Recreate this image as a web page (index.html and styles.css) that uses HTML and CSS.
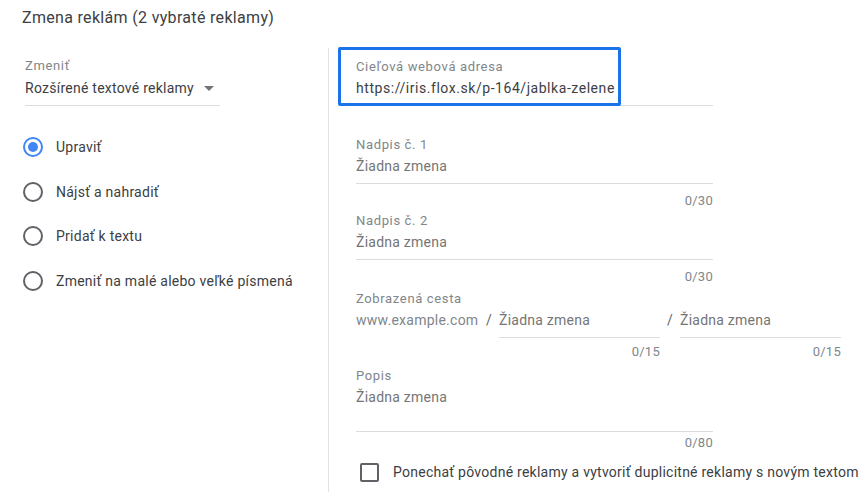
FILE: index.html
```html
<!DOCTYPE html>
<html lang="sk">
<head>
<meta charset="utf-8">
<title>Zmena reklám</title>
<link rel="stylesheet" href="styles.css">
</head>
<body>
<div class="page">
  <h1 class="title">Zmena reklám (2 vybraté reklamy)</h1>
  <div class="columns">
    <div class="left">
      <div class="select">
        <div class="label">Zmeniť</div>
        <div class="select-value">
          <span>Rozšírené textové reklamy</span>
          <span class="caret"></span>
        </div>
      </div>
      <div class="radios">
        <div class="radio-row">
          <span class="radio checked"></span>
          <span class="radio-label">Upraviť</span>
        </div>
        <div class="radio-row">
          <span class="radio"></span>
          <span class="radio-label">Nájsť a nahradiť</span>
        </div>
        <div class="radio-row">
          <span class="radio"></span>
          <span class="radio-label">Pridať k textu</span>
        </div>
        <div class="radio-row">
          <span class="radio"></span>
          <span class="radio-label">Zmeniť na malé alebo veľké písmená</span>
        </div>
      </div>
    </div>
    <div class="right">
      <div class="field field-url">
        <div class="focus-ring"></div>
        <div class="label">Cieľová webová adresa</div>
        <div class="value dark url">https://iris.flox.sk/p-164/jablka-zelene</div>
      </div>
      <div class="field">
        <div class="label">Nadpis č. 1</div>
        <div class="value">Žiadna zmena</div>
      </div>
      <div class="counter">0/30</div>
      <div class="field">
        <div class="label">Nadpis č. 2</div>
        <div class="value">Žiadna zmena</div>
      </div>
      <div class="counter">0/30</div>
      <div class="path">
        <div class="label">Zobrazená cesta</div>
        <div class="path-row">
          <div class="path-domain">www.example.com</div>
          <div class="sep">/</div>
          <div class="path-part">
            <div class="value path-value">Žiadna zmena</div>
            <div class="counter">0/15</div>
          </div>
          <div class="sep">/</div>
          <div class="path-part">
            <div class="value path-value">Žiadna zmena</div>
            <div class="counter">0/15</div>
          </div>
        </div>
      </div>
      <div class="field field-desc">
        <div class="label">Popis</div>
        <div class="value">Žiadna zmena</div>
      </div>
      <div class="counter">0/80</div>
      <label class="check-row">
        <span class="checkbox"></span>
        <span class="check-label">Ponechať pôvodné reklamy a vytvoriť duplicitné reklamy s novým textom</span>
      </label>
    </div>
  </div>
</div>
</body>
</html>
```

FILE: styles.css
```css
* { box-sizing: border-box; }
html, body { margin: 0; padding: 0; background: #fff; }
body {
  font-family: Roboto, "Noto Sans", Arial, sans-serif;
  color: #3c4043;
  width: 868px;
  height: 492px;
  overflow: hidden;
  letter-spacing: 0.25px;
}
.page { display: flex; flex-direction: column; }
.title {
  margin: 0;
  padding: 8px 22px 0;
  font-size: 16px;
  font-weight: 400;
  line-height: 20px;
  letter-spacing: 0.32px;
  color: #3c4043;
  height: 48px;
}
.columns { display: flex; flex: 1; min-height: 444px; }
.left {
  width: 329px;
  border-right: 1px solid #e3e3e3;
  padding: 10px 0 0 25px;
}
.label {
  font-size: 13px;
  line-height: 16px;
  color: #80868b;
  letter-spacing: 0.65px;
}
.select { width: 195px; border-bottom: 1px solid #dadce0; padding-bottom: 7px; }
.select-value {
  display: flex;
  align-items: center;
  gap: 10px;
  margin-top: 4px;
  font-size: 14px;
  line-height: 20px;
  color: #3c4043;
}
.caret {
  width: 0; height: 0;
  border-left: 5px solid transparent;
  border-right: 5px solid transparent;
  border-top: 5px solid #757575;
  margin-top: 1px;
}
.radios { display: flex; flex-direction: column; gap: 24.5px; margin-top: 31px; }
.radio-row { display: flex; align-items: center; gap: 13px; height: 20px; margin-left: -2px; }
.radio {
  width: 20px; height: 20px;
  border: 2px solid #5f6368;
  border-radius: 50%;
  display: flex; align-items: center; justify-content: center;
  flex: none;
}
.radio.checked { border-color: #4285f4; }
.radio.checked::after {
  content: "";
  width: 10px; height: 10px;
  border-radius: 50%;
  background: #4285f4;
}
.radio-label { font-size: 14px; line-height: 20px; color: #3c4043; }

.right {
  flex: 1;
  padding: 11px 0 0 27px;
  display: flex;
  flex-direction: column;
}
.field {
  width: 357px;
  border-bottom: 1px solid #dadce0;
  padding-bottom: 7px;
  position: relative;
}
.value {
  font-size: 14px;
  line-height: 20px;
  color: #757575;
  margin-top: 3px;
}
.value.dark { color: #3c4043; }
.value.url { letter-spacing: 0.55px; white-space: nowrap; }
.field-url { margin-bottom: 31px; }
.focus-ring {
  position: absolute;
  left: -18px;
  top: -12px;
  width: 283px;
  height: 59px;
  border: 3px solid #1a73e8;
  border-radius: 2px;
}
.counter {
  width: 357px;
  text-align: right;
  font-size: 13px;
  line-height: 16px;
  color: #80868b;
  margin-top: 9px;
  margin-bottom: 4px;
}
.path { margin-top: 2px; }
.path-row { display: flex; align-items: flex-start; margin-top: 3px; }
.path-domain {
  width: 123px;
  flex: none;
  white-space: nowrap;
  font-size: 14px;
  line-height: 20px;
  color: #80868b;
}
.sep { font-size: 14px; line-height: 20px; color: #5f6368; width: 20px; text-align: center; flex: none; letter-spacing: 0; }
.path-part { width: 161px; flex: none; }
.path-value {
  margin-top: 0;
  border-bottom: 1px solid #dadce0;
  padding-bottom: 7px;
  line-height: 20px;
}
.path-part .counter { width: 100%; margin-top: 6px; margin-bottom: 0; }
.field-desc { margin-top: 8px; padding-bottom: 24px; }
.field-desc + .counter { margin-top: 3px; }
.check-row {
  display: flex;
  align-items: center;
  gap: 14px;
  margin-top: 7px;
  margin-left: 4px;
  white-space: nowrap;
}
.checkbox {
  width: 19px; height: 19px;
  border: 2px solid #5f6368;
  border-radius: 2px;
  flex: none;
}
.check-label { font-size: 14px; line-height: 20px; color: #3c4043; }
```
